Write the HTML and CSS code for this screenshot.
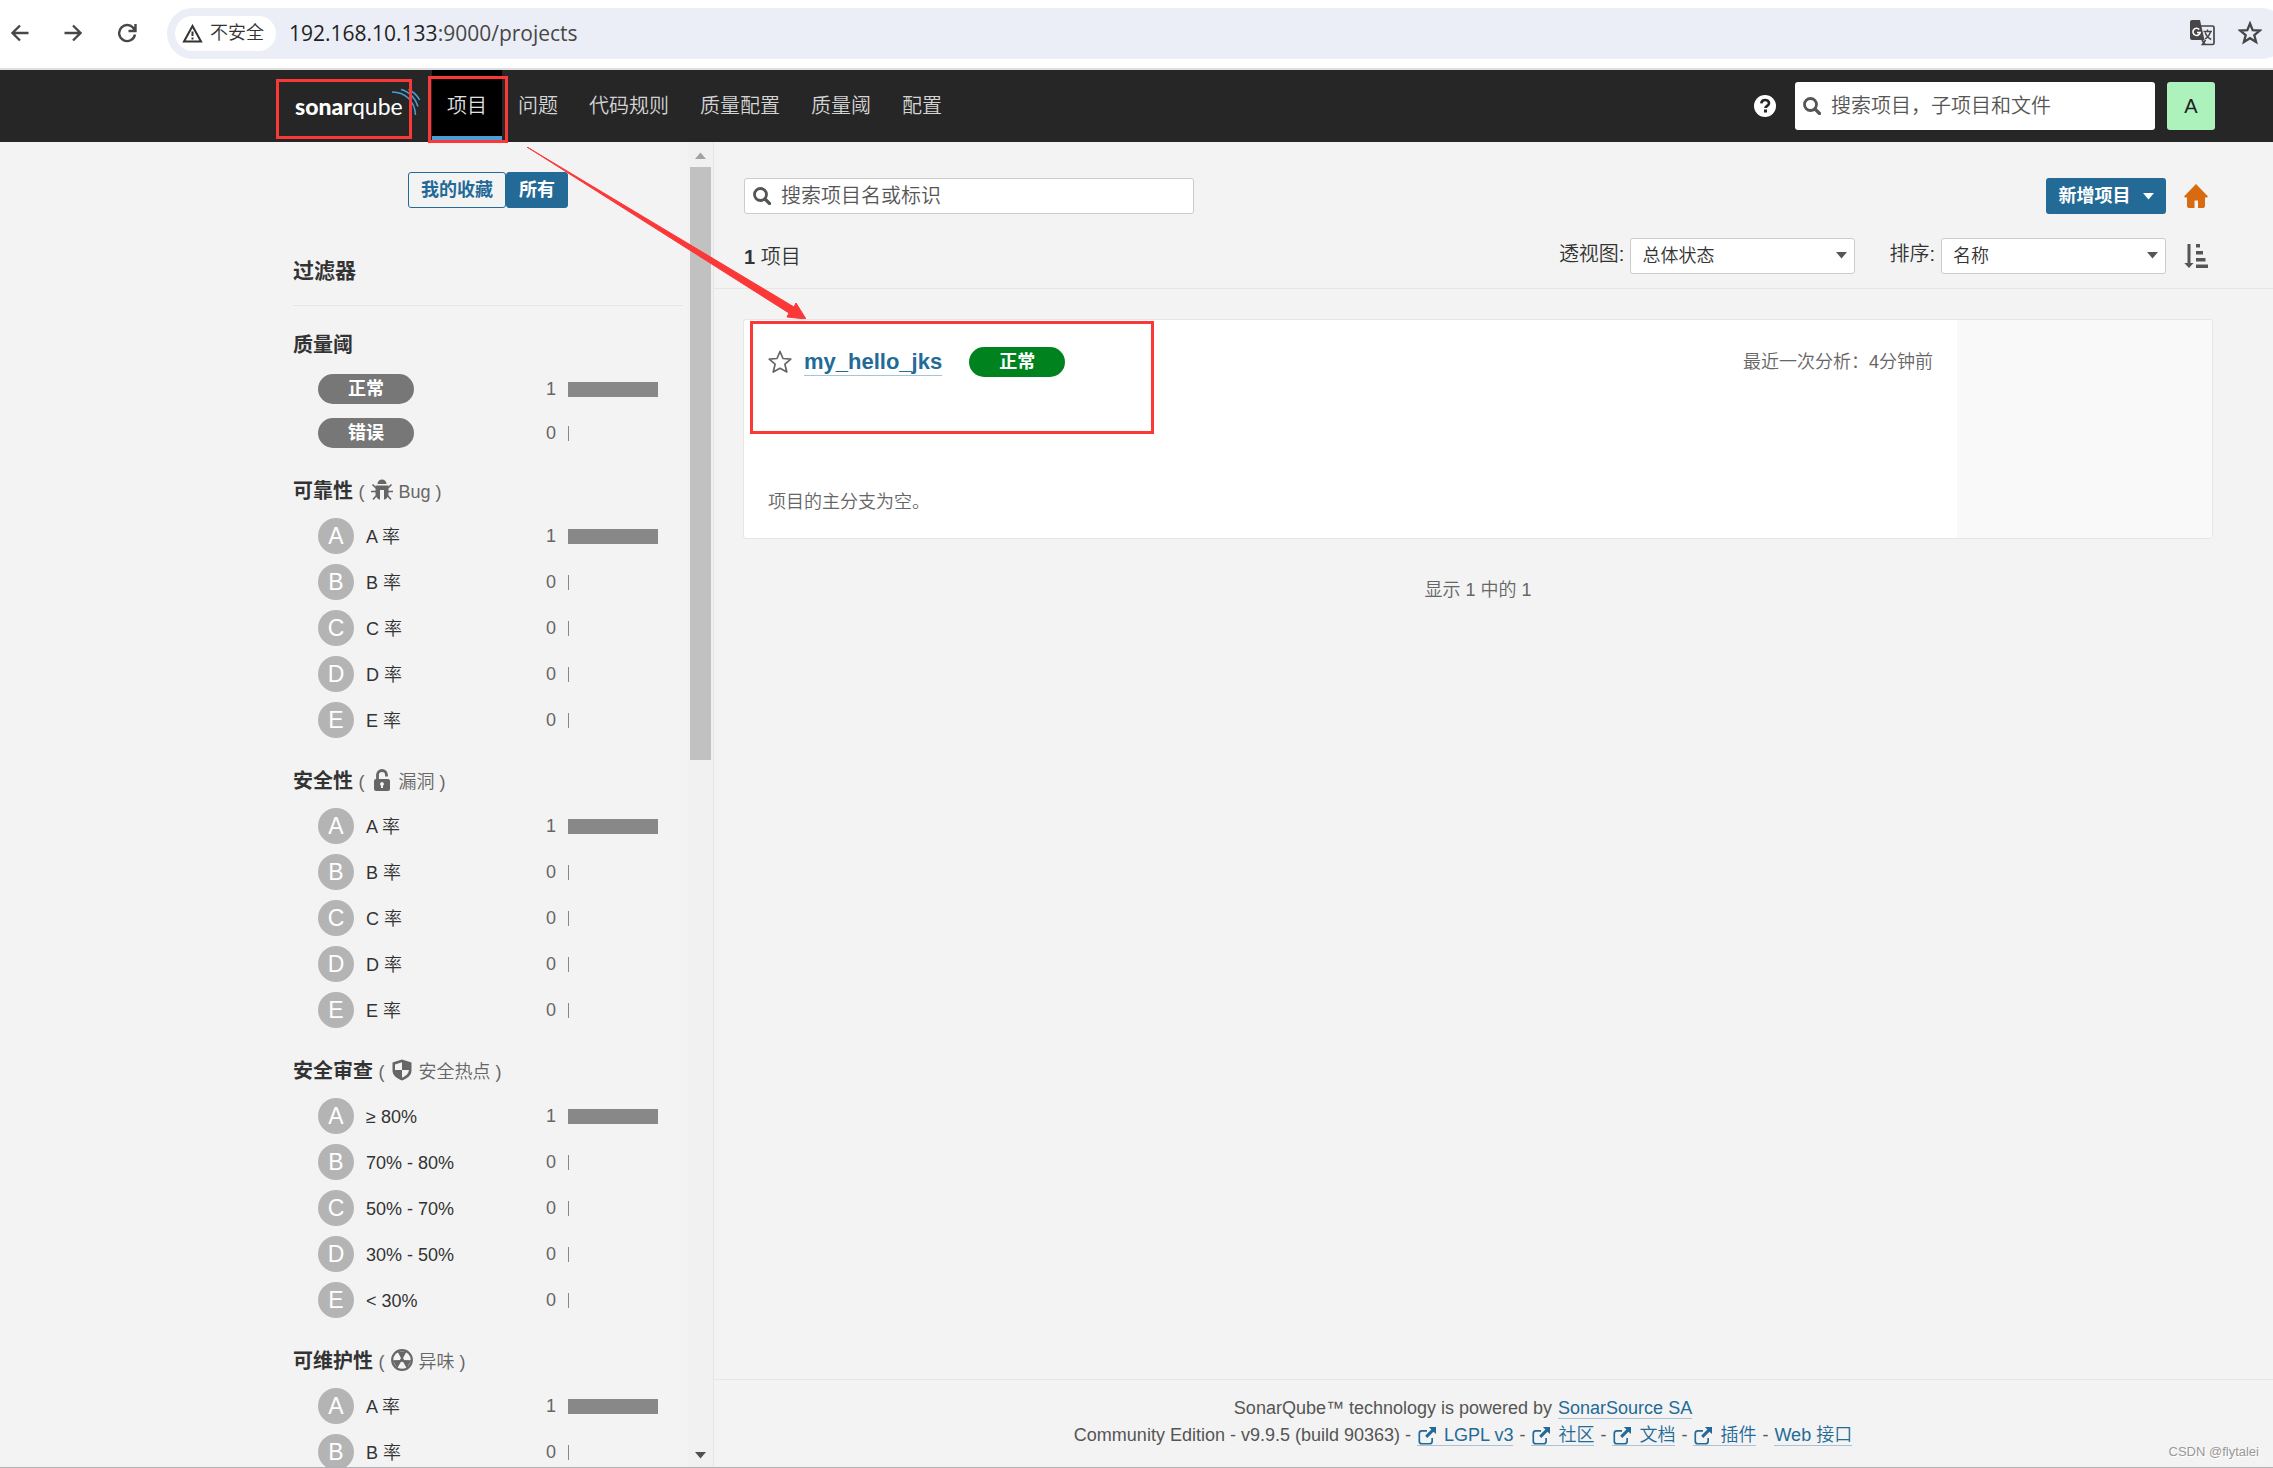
FILE: index.html
```html
<!DOCTYPE html>
<html lang="zh-CN">
<head>
<meta charset="utf-8">
<title>项目 - SonarQube</title>
<link rel="stylesheet" href="styles.css">
</head>
<body>
<svg class="defs" aria-hidden="true">
  <symbol id="search" viewBox="0 0 18 18"><circle cx="7.5" cy="7.5" r="6" fill="none" stroke="currentColor" stroke-width="2.8"/><path d="M12 12l4.5 4.5" stroke="currentColor" stroke-width="3.2" stroke-linecap="round"/></symbol>
  <symbol id="caret" viewBox="0 0 11 7"><path d="M0 0h11L5.500 6.500z" fill="currentColor"/></symbol>
  <symbol id="external" viewBox="0 0 14 14"><path d="M7 3H3a2 2 0 0 0-2 2v6a2 2 0 0 0 2 2h6a2 2 0 0 0 2-2V8.500" fill="none" stroke="currentColor" stroke-width="1.300"/><path d="M8.500 0H14v5.500L12 3.600 7.200 8.500 5.600 6.900 10.400 2z" fill="currentColor"/></symbol>
</svg>

<div class="browser">
  <button class="browser-btn" aria-label="后退"><svg width="18" height="18" viewBox="0 0 18 18"><path d="M17.500 9H2M9 1.500L1.500 9 9 16.500" fill="none" stroke="currentColor" stroke-width="2.300"/></svg></button>
  <button class="browser-btn" aria-label="前进"><svg width="18" height="18" viewBox="0 0 18 18"><path d="M.5 9H16M9 1.500L16.500 9 9 16.500" fill="none" stroke="currentColor" stroke-width="2.300"/></svg></button>
  <button class="browser-btn" aria-label="刷新"><svg width="20" height="20" viewBox="0 0 20 20"><path d="M17.300 6.500A8 8 0 1 0 18 11.500M18.500 1v7H11.500" fill="none" stroke="currentColor" stroke-width="2.400"/></svg></button>
  <div class="address">
    <span class="insecure"><svg width="21" height="19" viewBox="0 0 21 19"><path d="M10.500 2L19 17.500H2z" fill="none" stroke="currentColor" stroke-width="2"/><path d="M10.500 7.500v4.500M10.500 13.500v2" stroke="currentColor" stroke-width="2"/></svg>不安全</span>
    <span class="url">192.168.10.133<span class="url-rest">:9000/projects</span></span>
    <button class="browser-icon" aria-label="翻译"><svg width="25" height="26" viewBox="0 0 25 26"><path d="M2 0h8l4.500 20H2a2 2 0 0 1-2-2V2a2 2 0 0 1 2-2z" fill="currentColor"/><path d="M11 6h11.500a1.500 1.500 0 0 1 1.500 1.500v15.500a1.500 1.500 0 0 1-1.500 1.500H12.500l3-4.500M12 20l3 4.500" fill="none" stroke="currentColor" stroke-width="1.700"/><path d="M9.300 9.500a3.600 3.600 0 1 0 .8 3H7" fill="none" stroke="#fff" stroke-width="1.600"/><path d="M13.500 11.500h8.500M17.500 9.500v2M20.500 11.500c-.8 3.500-3 6-5.500 7.500M15.200 12.500c.8 3 3 5.500 6 7" fill="none" stroke="currentColor" stroke-width="1.400"/></svg></button>
    <button class="browser-icon" aria-label="收藏"><svg width="24" height="24" viewBox="0 0 24 24"><path d="M12 2.500l2.700 6.600 7 .5-5.400 4.500 1.800 6.900L12 17.200 5.900 21l1.800-6.900L2.300 9.600l7-.5z" fill="none" stroke="currentColor" stroke-width="2.300"/></svg></button>
  </div>
</div>

<header class="topbar">
  <a class="logo" href="#"><b>sonar</b><span>qube</span><svg class="waves" width="29" height="28" viewBox="0 0 29 28"><path d="M0 4C13 4 23 13 23.500 27M9 1.500C18 4 24 11 26 18.500M16.500 1.500C22 4 25.500 8 27.700 12" fill="none" stroke="#4b9fd5" stroke-width="1.500"/></svg><i class="mark mark-logo"></i></a>
  <nav class="nav">
    <a class="active" href="#">项目<i class="mark mark-tab"></i></a>
    <a href="#">问题</a>
    <a href="#">代码规则</a>
    <a href="#">质量配置</a>
    <a href="#">质量阈</a>
    <a href="#">配置</a>
  </nav>
  <button class="help" aria-label="帮助"><svg width="22" height="22" viewBox="0 0 22 22"><circle cx="11" cy="11" r="11" fill="#fff"/><path d="M7.300 8.300C7.600 6 9 5 11.200 5c2 0 3.800 1.200 3.800 3.200 0 2.600-3.500 2.600-3.500 4.800" fill="none" stroke="#262626" stroke-width="2.600"/><path d="M10 14.500h3v3h-3z" fill="#262626"/></svg></button>
  <label class="field global-search"><svg width="18" height="18"><use href="#search"/></svg><input type="text" placeholder="搜索项目，子项目和文件" aria-label="搜索项目，子项目和文件"></label>
  <button class="avatar">A</button>
</header>

<div class="page">
  <aside class="sidebar">
    <div class="filters">
      <div class="toggle"><button>我的收藏</button><button class="on">所有</button></div>
      <h2>过滤器</h2>

      <section class="facet">
        <h3>质量阈</h3>
        <ul class="badges">
          <li><button><span class="level">正常</span><span class="num">1</span><span class="bar full"></span></button></li>
          <li><button><span class="level">错误</span><span class="num">0</span><span class="bar"></span></button></li>
        </ul>
      </section>

      <section class="facet">
        <h3>可靠性 <small>( <svg width="22" height="22" viewBox="0 0 22 22"><path d="M6.500 5a4.500 4.500 0 0 1 9 0zM4.500 6.500h13v8c0 4-3 6-4.500 6v-9.500h-4V20.500c-1.500 0-4.500-2-4.500-6z" fill="currentColor"/><path d="M5 9L1.500 5.500M17 9l3.500-3.500M0 12.500h5M17 12.500h5M5.500 16.500L2 20.500M16.500 16.500l3.500 4" stroke="currentColor" stroke-width="1.600" fill="none"/></svg> Bug )</small></h3>
        <ul>
          <li><button><span class="rate">A</span><span class="name">A 率</span><span class="num">1</span><span class="bar full"></span></button></li>
          <li><button><span class="rate">B</span><span class="name">B 率</span><span class="num">0</span><span class="bar"></span></button></li>
          <li><button><span class="rate">C</span><span class="name">C 率</span><span class="num">0</span><span class="bar"></span></button></li>
          <li><button><span class="rate">D</span><span class="name">D 率</span><span class="num">0</span><span class="bar"></span></button></li>
          <li><button><span class="rate">E</span><span class="name">E 率</span><span class="num">0</span><span class="bar"></span></button></li>
        </ul>
      </section>

      <section class="facet">
        <h3>安全性 <small>( <svg width="22" height="22" viewBox="0 0 22 22"><path d="M5 10h12a2 2 0 0 1 2 2v8a2 2 0 0 1-2 2H5a2 2 0 0 1-2-2v-8a2 2 0 0 1 2-2zm6 3a2 2 0 0 0-1 3.700V19h2v-2.300A2 2 0 0 0 11 13z" fill="currentColor" fill-rule="evenodd"/><path d="M6.500 11V6a4.500 4.500 0 0 1 9 0v1.500" fill="none" stroke="currentColor" stroke-width="2.800"/></svg> 漏洞 )</small></h3>
        <ul>
          <li><button><span class="rate">A</span><span class="name">A 率</span><span class="num">1</span><span class="bar full"></span></button></li>
          <li><button><span class="rate">B</span><span class="name">B 率</span><span class="num">0</span><span class="bar"></span></button></li>
          <li><button><span class="rate">C</span><span class="name">C 率</span><span class="num">0</span><span class="bar"></span></button></li>
          <li><button><span class="rate">D</span><span class="name">D 率</span><span class="num">0</span><span class="bar"></span></button></li>
          <li><button><span class="rate">E</span><span class="name">E 率</span><span class="num">0</span><span class="bar"></span></button></li>
        </ul>
      </section>

      <section class="facet">
        <h3>安全审查 <small>( <svg width="22" height="22" viewBox="0 0 22 22"><path d="M11 .5l9.500 3v8c0 5-4.500 8-9.500 10-5-2-9.500-5-9.500-10v-8zM11 3.200L4 5.400V11h7v7.800c4-1.800 6.500-4 7-7.800h-7z" fill="currentColor" fill-rule="evenodd"/></svg> 安全热点 )</small></h3>
        <ul>
          <li><button><span class="rate">A</span><span class="name">≥ 80%</span><span class="num">1</span><span class="bar full"></span></button></li>
          <li><button><span class="rate">B</span><span class="name">70% - 80%</span><span class="num">0</span><span class="bar"></span></button></li>
          <li><button><span class="rate">C</span><span class="name">50% - 70%</span><span class="num">0</span><span class="bar"></span></button></li>
          <li><button><span class="rate">D</span><span class="name">30% - 50%</span><span class="num">0</span><span class="bar"></span></button></li>
          <li><button><span class="rate">E</span><span class="name">&lt; 30%</span><span class="num">0</span><span class="bar"></span></button></li>
        </ul>
      </section>

      <section class="facet">
        <h3>可维护性 <small>( <svg width="22" height="22" viewBox="0 0 22 22"><circle cx="11" cy="11" r="9.800" fill="none" stroke="currentColor" stroke-width="2.200"/><circle cx="11" cy="11" r="2" fill="currentColor"/><path d="M11 11L6.500 2.500h9zM11 11l9.300.3-4.500 8zM11 11l-9.300.3 4.500 8z" fill="currentColor"/></svg> 异味 )</small></h3>
        <ul>
          <li><button><span class="rate">A</span><span class="name">A 率</span><span class="num">1</span><span class="bar full"></span></button></li>
          <li><button><span class="rate">B</span><span class="name">B 率</span><span class="num">0</span><span class="bar"></span></button></li>
        </ul>
      </section>
    </div>
    <div class="scrollbar"><svg class="up" width="11" height="7"><use href="#caret"/></svg><div class="thumb"></div><svg class="down" width="11" height="7"><use href="#caret"/></svg></div>
  </aside>

  <main class="main">
    <div class="toolbar">
      <div class="tools">
        <label class="field project-search"><svg width="18" height="18"><use href="#search"/></svg><input type="text" placeholder="搜索项目名或标识" aria-label="搜索项目名或标识"></label>
        <button class="create">新增项目<svg width="11" height="7"><use href="#caret"/></svg></button>
        <a class="tool-icon home" href="#" aria-label="主页"><svg width="24" height="24" viewBox="0 0 24 24"><path d="M12 0l12 12.500-1.200 1H21V22a2 2 0 0 1-2 2h-5v-7.500h-3.500V24H5a2 2 0 0 1-2-2v-8.500H1.200L0 12.500z" fill="currentColor"/></svg></a>
      </div>
      <div class="tools">
        <p class="count"><b>1</b> 项目</p>
        <label for="view">透视图:</label>
        <span class="select view"><select id="view"><option>总体状态</option></select><svg width="11" height="7"><use href="#caret"/></svg></span>
        <label for="sort">排序:</label>
        <span class="select"><select id="sort"><option>名称</option></select><svg width="11" height="7"><use href="#caret"/></svg></span>
        <button class="tool-icon" aria-label="升序"><svg width="24" height="24" viewBox="0 0 24 24"><path d="M3.500 0h3v19h3L5 24 .3 19h3.200zM12 0h4v3.500h-4zM12 7h7v3.500h-7zM12 14h9.500v3.500H12zM12 20.500h12V24H12z" fill="currentColor"/></svg></button>
      </div>
    </div>

    <div class="list">
      <article class="card">
        <div class="card-body">
          <div class="card-head">
            <button class="star" aria-label="收藏项目"><svg width="24" height="24" viewBox="0 0 24 24"><path d="M12 1.500l3 7 7.800.7-5.900 5 1.900 7.800L12 18.300 5.200 22l1.900-7.800-5.900-5L9 8.500z" fill="none" stroke="currentColor" stroke-width="1.700" stroke-linejoin="round"/></svg></button>
            <h4><a href="#">my_hello_jks</a></h4>
            <span class="level ok">正常</span>
            <span class="when">最近一次分析：4分钟前</span>
          </div>
          <p class="note">项目的主分支为空。</p>
        </div>
        <div class="card-side"></div>
        <i class="mark mark-card"></i>
      </article>
      <p class="shown">显示 1 中的 1</p>
    </div>

    <footer class="footer">
      <div>SonarQube™ technology is powered by <a href="#">SonarSource SA</a></div>
      <div>Community Edition - v9.9.5 (build 90363) - <a href="#"><svg width="20" height="18"><use href="#external"/></svg> LGPL v3</a> - <a href="#"><svg width="20" height="18"><use href="#external"/></svg> 社区</a> - <a href="#"><svg width="20" height="18"><use href="#external"/></svg> 文档</a> - <a href="#"><svg width="20" height="18"><use href="#external"/></svg> 插件</a> - <a href="#">Web 接口</a></div>
    </footer>
  </main>
</div>

<svg class="arrow" width="279" height="172" viewBox="0 0 279 172"><path d="M0 0L267 160l2-4 10 16-19-2 2-4z" fill="#fb3838" stroke="#fb3838" stroke-width="1"/></svg>
<span class="watermark">CSDN @flytalei</span>
</body>
</html>
```

FILE: styles.css
```css
* { box-sizing: border-box; }

body {
  margin: 0;
  height: 100vh;
  display: flex;
  flex-direction: column;
  position: relative;
  overflow: hidden;
  border-bottom: 1px solid #b0b1b5;
  background: #f3f3f3;
  color: #333;
  font: 350 18px/27px "Liberation Sans", "Noto Sans CJK SC", sans-serif;
}

h2, h3, h4, p, ul { margin: 0; padding: 0; }
b { font-weight: 700; }
ul { list-style: none; }
svg { flex: none; }
button, input, select { font: inherit; color: inherit; }
button { padding: 0; border: 0; background: none; }
a { color: #236a97; text-decoration: none; }
.defs { position: absolute; width: 0; height: 0; }

/* Browser bar */
.browser {
  display: flex;
  align-items: center;
  height: 70px;
  padding: 0 0 2px 11px;
  border-bottom: 2px solid #dfdfdf;
  background: #fff;
  color: #474747;
}
.browser-btn { display: flex; width: 18px; margin-right: 35px; }
.browser-btn:nth-child(3) { width: 20px; margin-right: 30px; }
.address {
  flex: 1;
  display: flex;
  align-items: center;
  height: 51px;
  margin-right: -14px;
  padding: 0 25px 0 8px;
  border-radius: 26px;
  background: #ebeef6;
}
.insecure {
  display: flex;
  align-items: center;
  gap: 7px;
  height: 35px;
  padding: 0 12px 0 7px;
  border-radius: 18px;
  background: #fff;
  color: #333;
}
.url {
  flex: 1;
  margin-left: 13px;
  color: #1f1f1f;
  font: 21px/30px "Open Sans", sans-serif;
}
.url-rest { color: #474747; }
.browser-icon { display: flex; margin-left: 23px; }

/* Top navigation */
.topbar {
  display: flex;
  align-items: center;
  flex: none;
  height: 72px;
  padding: 0 58px 0 295px;
  background: #262626;
}
.logo {
  position: relative;
  width: 137px;
  color: #fff;
  font: 23px/36px Lato, sans-serif;
}
.logo b { font-weight: 900; }
.waves { position: absolute; left: 97px; top: 0; }
.nav { flex: 1; display: flex; gap: 1px; font-size: 20px; }
.nav a {
  position: relative;
  height: 72px;
  padding: 0 15px;
  color: #d4d4d4;
  line-height: 73px;
}
.nav .active { border-bottom: 6px solid #4b9fd5; background: #000; color: #e1e1e1; }
.help { display: flex; margin-right: 19px; }
.field {
  display: flex;
  align-items: center;
  gap: 10px;
  padding: 0 8px;
  border-radius: 3px;
  background: #fff;
  color: #555;
  font-size: 20px;
}
.field input { flex: 1; min-width: 0; padding: 0; border: 0; outline: 0; background: none; }
.field input::placeholder { color: #555; opacity: 1; }
.global-search { width: 360px; height: 48px; margin-right: 12px; }
.avatar {
  width: 48px;
  height: 48px;
  border-radius: 3px;
  background: #adf2bd;
  color: #222;
  font-size: 20px;
}

/* Page columns */
.page { flex: 1; min-height: 0; display: flex; }
.sidebar {
  display: flex;
  flex: none;
  width: 714px;
  padding-left: 293px;
  border-right: 1px solid #e6e6e6;
}
.filters { flex: 1; margin-right: 5px; overflow: hidden; padding-top: 30px; }
.scrollbar {
  display: flex;
  flex-direction: column;
  align-items: center;
  width: 25px;
  padding: 10px 0 8px;
  background: #f1f1f1;
}
.up { color: #a3a3a3; transform: rotate(180deg); }
.thumb { width: 21px; height: 45.4%; margin: 8px 0 auto; background: #c1c1c1; }
.down { color: #505050; }

/* Filters */
.toggle { display: flex; justify-content: center; }
.toggle button {
  height: 36px;
  padding: 0 12px;
  border: 1px solid #236a97;
  border-radius: 3px;
  color: #236a97;
  font-weight: 700;
}
.toggle .on { background: #236a97; color: #fff; }
h2 {
  margin-top: 47px;
  padding-bottom: 19px;
  border-bottom: 1px solid #e6e6e6;
  font-size: 21px;
  line-height: 31px;
}
.facet { margin-bottom: 23px; }
h2 + .facet { margin-top: 24px; }
h3 { margin-bottom: 6px; font-size: 20px; line-height: 30px; }
h3 small { color: #666; font-size: 18px; font-weight: 350; }
h3 svg { margin: 0 1px; vertical-align: -3px; color: #666; }
.facet ul { padding: 0 25px; }
.facet li button {
  display: flex;
  align-items: center;
  width: 100%;
  height: 46px;
  text-align: left;
}
.facet .badges { display: grid; gap: 14px; padding: 8px 25px 5px; }
.facet .badges button { height: 30px; }
.level {
  width: 96px;
  border-radius: 15px;
  background: #777;
  color: #fff;
  font-weight: 700;
  line-height: 30px;
  text-align: center;
}
.rate {
  width: 36px;
  margin-right: 12px;
  border-radius: 50%;
  background: #b4b4b4;
  color: #fff;
  font-size: 23px;
  line-height: 36px;
  text-align: center;
}
.name { padding-top: 3px; }
.num { margin-left: auto; color: #666; }
.bar { width: 90px; height: 15px; margin-left: 12px; border-left: 1px solid #888; }
.full { background: #888; }

/* Project list */
.main { flex: 1; min-width: 0; display: flex; flex-direction: column; }
.toolbar {
  display: grid;
  gap: 24px;
  padding: 36px 65px 14px 30px;
  border-bottom: 1px solid #e6e6e6;
}
.tools { display: flex; align-items: flex-start; height: 36px; font-size: 20px; line-height: 32px; }
.project-search { width: 450px; height: 36px; border: 1px solid #ccc; }
.create {
  display: flex;
  align-items: center;
  justify-content: center;
  gap: 12px;
  width: 120px;
  height: 36px;
  margin-left: auto;
  border-radius: 3px;
  background: #236a97;
  color: #fff;
  font-size: 18px;
  font-weight: 700;
}
.tool-icon { display: flex; align-items: center; height: 36px; margin-left: 18px; color: #555; }
.home { color: #d86a10; }
.count { flex: 1; line-height: 39px; }
.select { position: relative; width: 225px; margin-left: 6px; }
.view { margin-right: 34px; }
.select select {
  display: block;
  width: 100%;
  height: 36px;
  padding: 0 11px;
  border: 1px solid #ccc;
  border-radius: 3px;
  appearance: none;
  background: #fff;
  font-size: 18px;
}
.select svg { position: absolute; right: 8px; top: 14px; color: #555; }
.list { flex: 1; padding: 30px 60px 0 29px; }
.card {
  position: relative;
  display: flex;
  border: 1px solid #e6e6e6;
  border-radius: 3px;
  background: #fff;
}
.card-body { flex: 1; padding: 27px 24px 22px; color: #666; }
.card-head { display: flex; align-items: center; }
.star { display: flex; margin-right: 12px; color: #666; }
h4 { margin-right: 27px; font-size: 22px; line-height: 26px; }
h4 a { display: block; border-bottom: 1px solid #a7c3d5; }
.ok { background: #00831f; }
.when { margin-left: auto; }
.note { margin-top: 112px; }
.card-side { width: 255px; background: #f9f9f9; }
.shown { margin-top: 38px; color: #666; text-align: center; }
.footer {
  padding: 15px 60px 18px 0;
  border-top: 1px solid #e6e6e6;
  color: #555;
  text-align: center;
}
.footer a { margin: 0 1px; border-bottom: 1px solid #a7c3d5; }
.footer svg { margin-right: 2px; vertical-align: -4px; }

/* Annotations */
.mark { position: absolute; border: 3px solid #fb3838; }
.mark-logo { left: -19px; top: -9px; width: 136px; height: 60px; }
.mark-tab { left: -4px; top: 6px; width: 80px; height: 67px; z-index: 1; }
.mark-card { left: 6px; top: 1px; width: 404px; height: 113px; }
.arrow { position: absolute; left: 527px; top: 147px; }
.watermark {
  position: absolute;
  right: 14px;
  bottom: 5px;
  color: #999;
  font-size: 13px;
  line-height: 20px;
  text-shadow: 1px 1px #fff;
}
```
